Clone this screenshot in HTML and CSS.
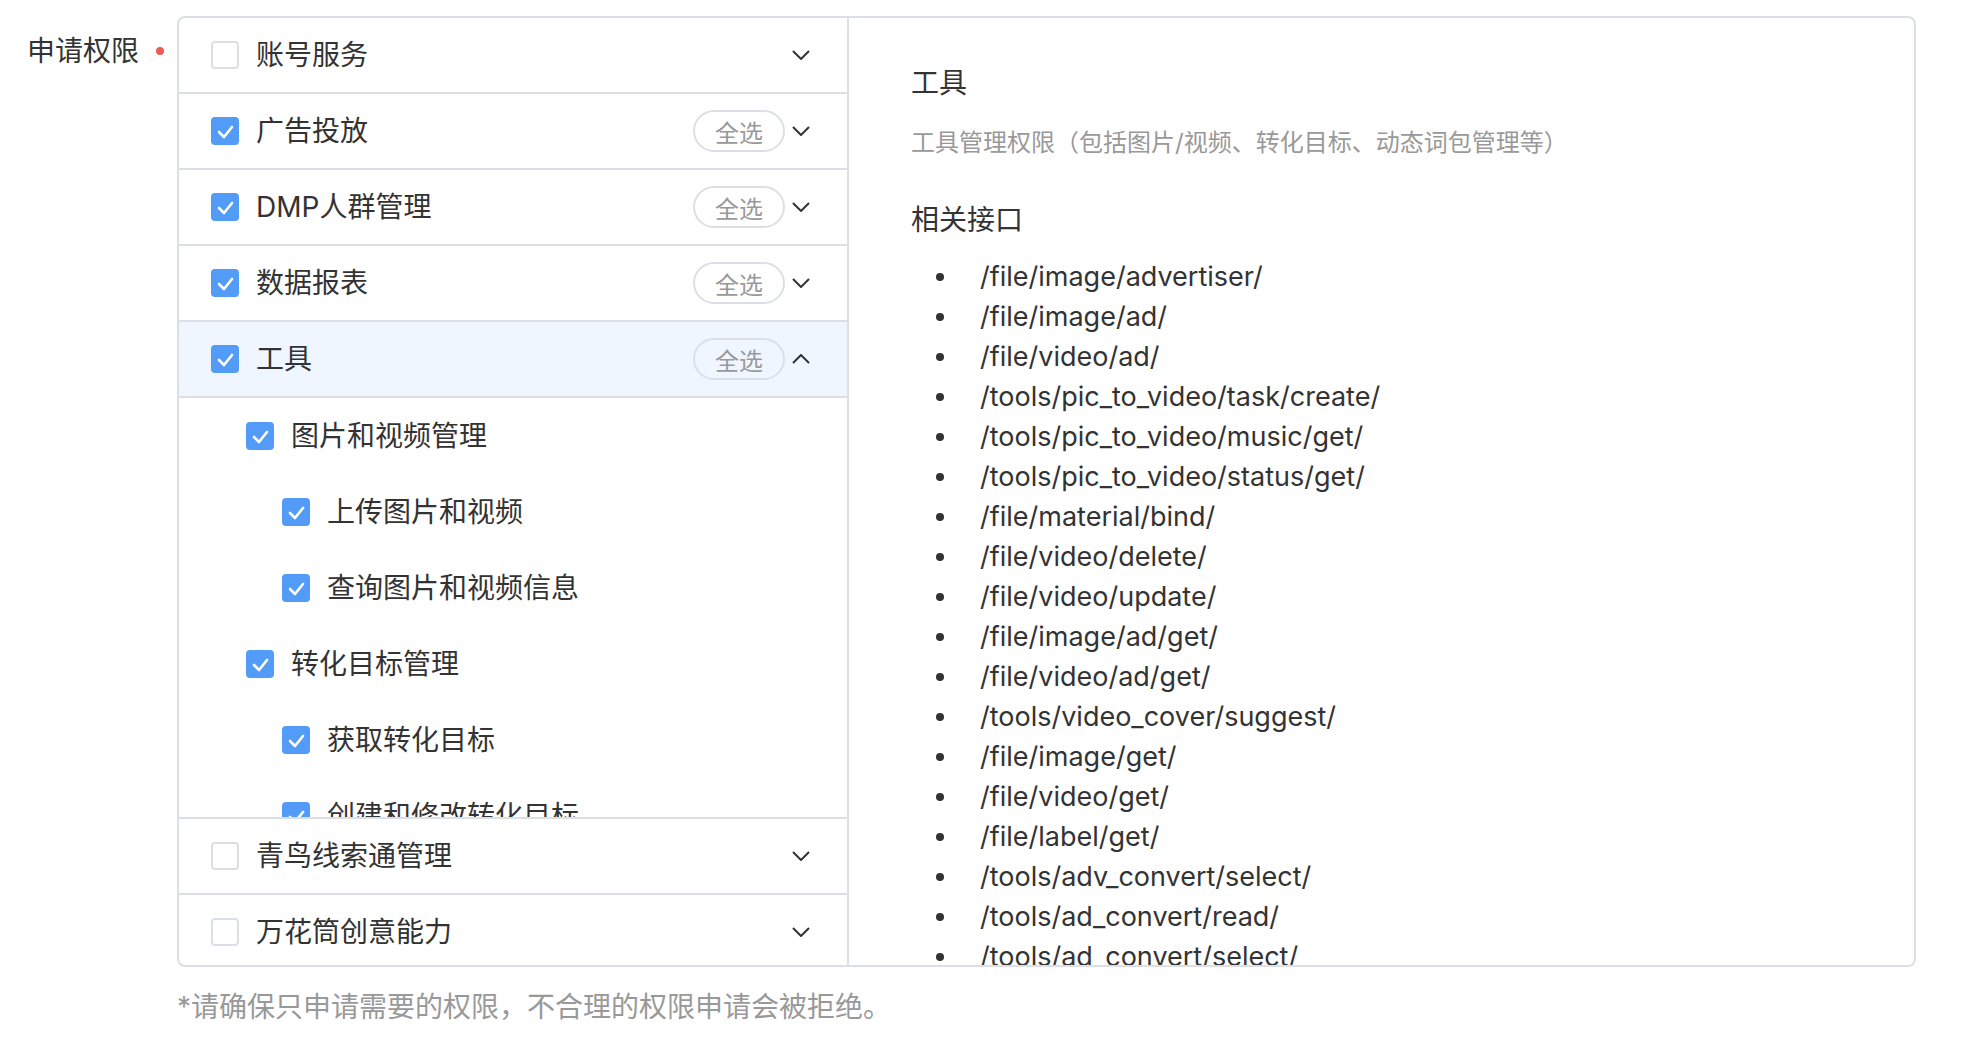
FILE: index.html
```html
<!DOCTYPE html>
<html lang="zh-CN">
<head>
    <meta charset="UTF-8">
    <meta name="viewport" content="width=device-width, initial-scale=1.0">
    <title>申请权限</title>
    <link rel="stylesheet" href="styles.css">
</head>
<body>
    <div class="form-item">
        <div class="form-label">申请权限<span class="required-dot"></span></div>
        <div class="form-content">
            <div class="perm-box">
                <div class="perm-tree">
                    <div class="perm-row">
                        <span class="checkbox"></span>
                        <span class="perm-name">账号服务</span>
                        <svg class="chevron" viewBox="0 0 18 10"><polyline points="1,1 9,9 17,1"/></svg>
                    </div>
                    <div class="perm-row">
                        <span class="checkbox checked"><svg viewBox="0 0 28 28"><polyline points="8,15 13,20 21,10"/></svg></span>
                        <span class="perm-name">广告投放</span>
                        <span class="select-all">全选</span>
                        <svg class="chevron" viewBox="0 0 18 10"><polyline points="1,1 9,9 17,1"/></svg>
                    </div>
                    <div class="perm-row">
                        <span class="checkbox checked"><svg viewBox="0 0 28 28"><polyline points="8,15 13,20 21,10"/></svg></span>
                        <span class="perm-name">DMP人群管理</span>
                        <span class="select-all">全选</span>
                        <svg class="chevron" viewBox="0 0 18 10"><polyline points="1,1 9,9 17,1"/></svg>
                    </div>
                    <div class="perm-row">
                        <span class="checkbox checked"><svg viewBox="0 0 28 28"><polyline points="8,15 13,20 21,10"/></svg></span>
                        <span class="perm-name">数据报表</span>
                        <span class="select-all">全选</span>
                        <svg class="chevron" viewBox="0 0 18 10"><polyline points="1,1 9,9 17,1"/></svg>
                    </div>
                    <div class="perm-row active">
                        <span class="checkbox checked"><svg viewBox="0 0 28 28"><polyline points="8,15 13,20 21,10"/></svg></span>
                        <span class="perm-name">工具</span>
                        <span class="select-all">全选</span>
                        <svg class="chevron" viewBox="0 0 18 10"><polyline points="1,9 9,1 17,9"/></svg>
                    </div>
                    <div class="perm-children">
                        <div class="child-row level-1">
                            <span class="checkbox checked"><svg viewBox="0 0 28 28"><polyline points="8,15 13,20 21,10"/></svg></span>
                            <span class="perm-name">图片和视频管理</span>
                        </div>
                        <div class="child-row level-2">
                            <span class="checkbox checked"><svg viewBox="0 0 28 28"><polyline points="8,15 13,20 21,10"/></svg></span>
                            <span class="perm-name">上传图片和视频</span>
                        </div>
                        <div class="child-row level-2">
                            <span class="checkbox checked"><svg viewBox="0 0 28 28"><polyline points="8,15 13,20 21,10"/></svg></span>
                            <span class="perm-name">查询图片和视频信息</span>
                        </div>
                        <div class="child-row level-1">
                            <span class="checkbox checked"><svg viewBox="0 0 28 28"><polyline points="8,15 13,20 21,10"/></svg></span>
                            <span class="perm-name">转化目标管理</span>
                        </div>
                        <div class="child-row level-2">
                            <span class="checkbox checked"><svg viewBox="0 0 28 28"><polyline points="8,15 13,20 21,10"/></svg></span>
                            <span class="perm-name">获取转化目标</span>
                        </div>
                        <div class="child-row level-2">
                            <span class="checkbox checked"><svg viewBox="0 0 28 28"><polyline points="8,15 13,20 21,10"/></svg></span>
                            <span class="perm-name">创建和修改转化目标</span>
                        </div>
                        <div class="child-row level-2">
                            <span class="checkbox checked"><svg viewBox="0 0 28 28"><polyline points="8,15 13,20 21,10"/></svg></span>
                            <span class="perm-name">删除转化目标</span>
                        </div>
                    </div>
                    <div class="perm-row">
                        <span class="checkbox"></span>
                        <span class="perm-name">青鸟线索通管理</span>
                        <svg class="chevron" viewBox="0 0 18 10"><polyline points="1,1 9,9 17,1"/></svg>
                    </div>
                    <div class="perm-row last">
                        <span class="checkbox"></span>
                        <span class="perm-name">万花筒创意能力</span>
                        <svg class="chevron" viewBox="0 0 18 10"><polyline points="1,1 9,9 17,1"/></svg>
                    </div>
                </div>

                <div class="perm-detail">
                    <div class="detail-title">工具</div>
                    <div class="detail-desc">工具管理权限（包括图片/视频、转化目标、动态词包管理等）</div>
                    <div class="detail-subtitle">相关接口</div>
                    <ul class="api-list">
                        <li>/file/image/advertiser/</li>
                        <li>/file/image/ad/</li>
                        <li>/file/video/ad/</li>
                        <li>/tools/pic_to_video/task/create/</li>
                        <li>/tools/pic_to_video/music/get/</li>
                        <li>/tools/pic_to_video/status/get/</li>
                        <li>/file/material/bind/</li>
                        <li>/file/video/delete/</li>
                        <li>/file/video/update/</li>
                        <li>/file/image/ad/get/</li>
                        <li>/file/video/ad/get/</li>
                        <li>/tools/video_cover/suggest/</li>
                        <li>/file/image/get/</li>
                        <li>/file/video/get/</li>
                        <li>/file/label/get/</li>
                        <li>/tools/adv_convert/select/</li>
                        <li>/tools/ad_convert/read/</li>
                        <li>/tools/ad_convert/select/</li>
                        <li>/tools/ad_convert/create/</li>
                        <li>/tools/ad_convert/update/</li>
                    </ul>
                </div>
            </div>
            <div class="form-tip">*请确保只申请需要的权限，不合理的权限申请会被拒绝。</div>
        </div>
    </div>
</body>
</html>
```

FILE: styles.css
```css
body {
    margin: 0;
    padding-top: 16px;
    background: #ffffff;
    color: #333333;
    font-family: "Inter", "Noto Sans CJK SC", sans-serif;
}

.form-item {
    display: flex;
    align-items: flex-start;
}

.form-label {
    width: 177px;
    box-sizing: border-box;
    padding-left: 27px;
    padding-top: 15px;
    font-size: 28px;
    line-height: 40px;
    display: flex;
    align-items: center;
    flex-shrink: 0;
}

.required-dot {
    width: 8px;
    height: 8px;
    border-radius: 50%;
    background: #ec5b56;
    margin-left: 17px;
}

.form-content {
    width: 1739px;
}

.perm-box {
    display: flex;
    height: 947px;
    border: 2px solid #dcdfe6;
    border-radius: 8px;
    overflow: hidden;
}

.perm-tree {
    width: 668px;
    flex-shrink: 0;
    border-right: 2px solid #dcdfe6;
    display: flex;
    flex-direction: column;
}

.perm-row {
    display: flex;
    align-items: center;
    height: 74px;
    padding: 0 37px 0 32px;
    border-bottom: 2px solid #dcdfe6;
    flex-shrink: 0;
}

.perm-row.last {
    border-bottom: none;
    height: auto;
    flex: 1;
    min-height: 0;
    padding-top: 3px;
}

.perm-row.active {
    background: #eff6ff;
}

.checkbox {
    width: 28px;
    height: 28px;
    box-sizing: border-box;
    border: 2px solid #dcdfe6;
    border-radius: 4px;
    background: #ffffff;
    flex-shrink: 0;
    display: flex;
}

.checkbox.checked {
    background: #529cf8;
    border-color: #529cf8;
}

.checkbox svg {
    width: 28px;
    height: 28px;
    margin: -2px;
    fill: none;
    stroke: #ffffff;
    stroke-width: 2.6;
    stroke-linecap: round;
    stroke-linejoin: round;
}

.perm-name {
    margin-left: 17px;
    font-size: 28px;
    line-height: 40px;
    flex: 1;
    white-space: nowrap;
}

.select-all {
    width: 92px;
    height: 42px;
    box-sizing: border-box;
    border: 2px solid #dcdfe6;
    border-radius: 21px;
    color: #999999;
    font-size: 24px;
    display: flex;
    align-items: center;
    justify-content: center;
}

.chevron {
    width: 18px;
    height: 10px;
    margin-left: 7px;
    fill: none;
    stroke: #333333;
    stroke-width: 2;
}

.perm-children {
    height: 419px;
    overflow: hidden;
    border-bottom: 2px solid #dcdfe6;
    flex-shrink: 0;
}

.child-row {
    display: flex;
    align-items: center;
    height: 76px;
}

.child-row.level-1 {
    padding-left: 67px;
}

.child-row.level-2 {
    padding-left: 103px;
}

.perm-detail {
    flex: 1;
    padding: 45px 62px 0;
    overflow: hidden;
}

.detail-title {
    font-size: 28px;
    line-height: 40px;
}

.detail-desc {
    margin-top: 23px;
    font-size: 24px;
    line-height: 34px;
    color: #999999;
}

.detail-subtitle {
    margin-top: 40px;
    font-size: 28px;
    line-height: 40px;
}

.api-list {
    list-style: none;
    margin: 17px 0 0;
    padding: 0 0 0 25px;
}

.api-list li {
    display: flex;
    align-items: center;
    font-size: 27px;
    line-height: 40px;
}

.api-list li::before {
    content: "";
    width: 8px;
    height: 8px;
    border-radius: 50%;
    background: #333333;
    margin-right: 36px;
    flex-shrink: 0;
}

.form-tip {
    margin-top: 20px;
    font-size: 28px;
    line-height: 40px;
    color: #999999;
}
```
